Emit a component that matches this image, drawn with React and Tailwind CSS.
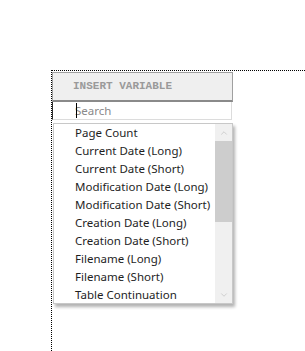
import { ChevronUp, ChevronDown } from "lucide-react"

const items = [
    "Page Count",
    "Current Date (Long)",
    "Current Date (Short)",
    "Modification Date (Long)",
    "Modification Date (Short)",
    "Creation Date (Long)",
    "Creation Date (Short)",
    "Filename (Long)",
    "Filename (Short)",
    "Table Continuation",
]

export default function App() {
    return (
        <div className="w-[305px] h-[351px] bg-white overflow-hidden pt-[70px] pl-[51px]">
            <div className="h-full border-t border-l border-dotted border-black">
                <div className="w-[181px] pt-px">
                    {/* Insert variable button */}
                    <div className="h-[30px] bg-[#efefef] border border-[#a0a0a0] border-b-2 border-b-[#8a8a8a] flex items-center pl-[20px] font-['Liberation_Mono',monospace] font-bold text-[11px] text-[#9a9a9a]">
                        INSERT VARIABLE
                    </div>

                    {/* Search */}
                    <div className="relative w-[180px] h-[18px] border border-[#dcdcdc] border-l-[#333] border-t-0 flex items-center pl-[22px] font-['Noto_Sans',sans-serif] text-[11.5px] text-[#8a8a8a]">
                        <span className="absolute left-[23px] top-[1px] w-px h-[15px] bg-black" />
                        Search
                    </div>

                    {/* Dropdown list */}
                    <div className="relative mt-[3px] ml-px w-[180px] h-[181px] bg-white border border-[#c8c8c8] shadow-[2px_3px_3px_rgba(0,0,0,0.3)] flex">
                        <div className="flex-1 flex flex-col font-['Noto_Sans',sans-serif] text-[11.5px] text-[#1e1e1e]">
                            {items.map((t) => (
                                <div key={t} className="h-[18px] leading-[18px] pl-[21px] whitespace-nowrap">
                                    {t}
                                </div>
                            ))}
                        </div>
                        <div className="w-[17px] bg-[#f0f0f0] flex flex-col">
                            <div className="h-[17px] flex items-center justify-center text-[#b0b0b0]">
                                <ChevronUp size={10} strokeWidth={1.25} />
                            </div>
                            <div className="h-[81px] bg-[#cdcdcd]" />
                            <div className="flex-1" />
                            <div className="h-[17px] flex items-center justify-center text-[#b0b0b0]">
                                <ChevronDown size={10} strokeWidth={1.25} />
                            </div>
                        </div>
                    </div>
                </div>
            </div>
        </div>
    )
}
